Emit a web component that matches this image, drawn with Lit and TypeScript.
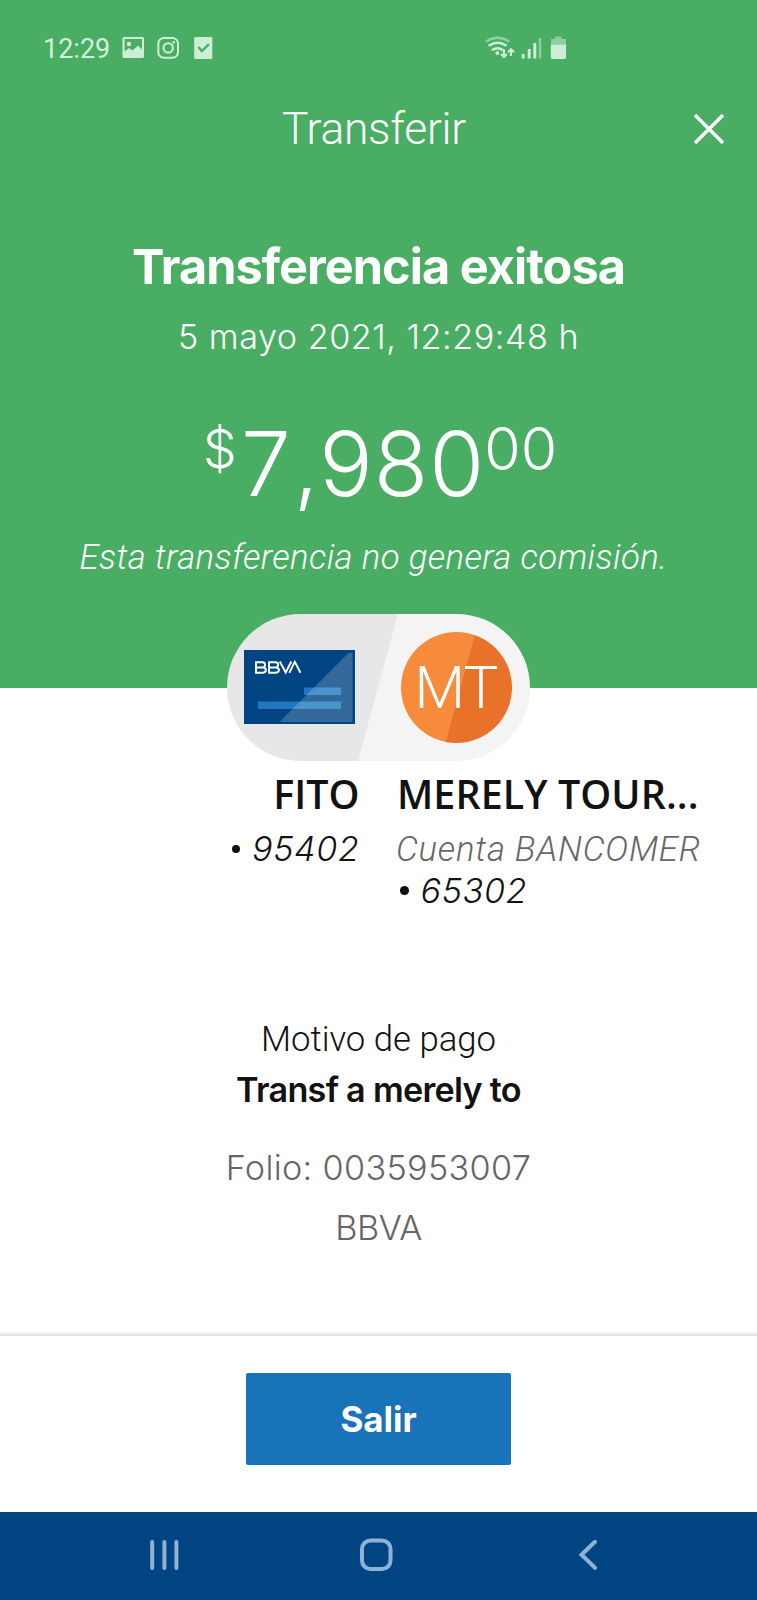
import { LitElement, html, css } from 'lit';
import { customElement } from 'lit/decorators.js';

@customElement('status-bar')
class StatusBar extends LitElement {
  static styles = css`
    :host { display: flex; height: 64px; padding: 33px 0 0 43px; box-sizing: border-box; color: #d5f0dc; }
    .time { font: 400 27px/32px Roboto, sans-serif; letter-spacing: 0; width: 79px; }
    svg { display: block; height: 32px; fill: none; stroke: none; }
    .right { margin-left: 271px; }
  `;
  render() {
    return html`
      <span class="time">12:29</span>
      <svg width="92" height="32" viewBox="122 33 92 32">
        <path fill="#cdeed6" fill-rule="evenodd" d="M124 37h18.500q1.500 0 1.500 1.500v18q0 1.500-1.500 1.500H124q-1.500 0-1.500-1.500v-18q0-1.500 1.500-1.500zM124.600 39v12.500l4.400-3.500 3.500 2.500 5.500-5 4 4V39z"/>
        <circle cx="129" cy="44" r="2.200" fill="#cdeed6"/>
        <rect x="158.300" y="38" width="19.700" height="19.700" rx="5.500" stroke="#cdeed6" stroke-width="2"/>
        <circle cx="168.200" cy="47.900" r="4.700" stroke="#cdeed6" stroke-width="2.100"/>
        <circle cx="173.800" cy="42.200" r="1.300" fill="#cdeed6"/>
        <path fill="#cdeed6" d="M195.500 37h15.500q1.300 0 1.300 1.300v19.400q0 1.300-1.300 1.300h-15.500q-1.300 0-1.300-1.300V38.300q0-1.300 1.300-1.300z"/>
        <path stroke="#49ae63" stroke-width="2.400" d="M198.300 47l3.600 4 7-6.800"/>
      </svg>
      <svg class="right" width="90" height="32" viewBox="485 33 90 32">
        <g stroke-width="2.500">
          <path stroke="#8fcea0" d="M485.800 41.700q12-7.800 23.600 0"/>
          <path stroke="#cdeed6" d="M488.700 45.800q9-6 17.800 0M492 50.200q5.500-4 11 0"/>
        </g>
        <circle cx="497.300" cy="53" r="1.900" fill="#cdeed6"/>
        <path stroke="#cdeed6" stroke-width="2.100" d="M504 49.500v7M501 54l3 3 3-3M511 56v-7M508 52.200l3-3 3 3"/>
        <path fill="#cdeed6" d="M521.700 54h3v4.500h-3zM527.700 49h3v9.500h-3zM533.300 43h3v15.500h-3z"/>
        <path fill="#8fcea0" d="M538.800 38h2.400v20.500h-2.400zM551 45v-6h4v-2.500h6.500V39h4.500v6z"/>
        <path fill="#cdeed6" d="M550.800 44.800h15.200v12.700q0 1.500-1.500 1.500h-12.200q-1.500 0-1.500-1.500z"/>
      </svg>
    `;
  }
}

@customElement('accounts-pill')
class AccountsPill extends LitElement {
  static styles = css`
    :host { display: flex; justify-content: space-between; align-items: center; width: 303px; height: 147px;
      padding: 0 18px; box-sizing: border-box; border-radius: 74px;
      background: linear-gradient(105.200deg, #e7e7e7 49.700%, #f4f4f4 50%); }
    svg { display: block; margin: -1px 0 0 -0.500px; }
    .avatar { width: 111px; height: 111px; border-radius: 50%; display: flex; align-items: center; justify-content: center;
      background: linear-gradient(105.200deg, #f68b3c 52.500%, #e9722b 53.200%);
      font: 300 58.300px/80px Roboto, sans-serif; letter-spacing: -0.600px; color: #fff; }
  `;
  render() {
    return html`
      <svg width="111" height="74" viewBox="0 0 111 74">
        <path fill="#004481" d="M0 0h111v74H0z"/>
        <path fill="#1f78be" d="M60 37.500h37v7.500H60zM14 51.500h83v7.500H14z"/>
        <path fill="#fff" fill-opacity=".2" d="M35.500 72L104.500 3h4v69z"/>
        <g fill="none" stroke="#fff" stroke-width="1.900">
          <path d="M12 12.300h6.200q3 0 3 2.500t-3 2.700H12zM12 17.500h6.700q3.200 0 3.200 2.600t-3.200 2.700H12zM25 12.300h6.200q3 0 3 2.500t-3 2.700H25zM25 17.500h6.700q3.200 0 3.200 2.600t-3.200 2.700H25z"/>
          <path d="M35.800 11.500l5.900 11 5.700-11M45.300 22.800l5.500-11 5.700 11"/>
        </g>
      </svg>
      <div class="avatar">MT</div>
    `;
  }
}

@customElement('app-root')
class AppRoot extends LitElement {
  static styles = css`
    :host { display: flex; flex-direction: column; width: 757px; height: 1600px; background: #fff; overflow: hidden;
      font-family: Roboto, sans-serif; font-weight: 300; color: #121212; white-space: nowrap; }
    .hero { height: 688px; background: #49ae63; color: #fff; display: flex; flex-direction: column; }
    .header { display: grid; grid-template-columns: 92px 1fr 101px; height: 60px; margin-top: 33px; align-items: center; }
    .header h1 { grid-column: 2; margin: 2px 0 -2px; text-align: center; font-weight: 300; font-size: 44.400px; line-height: 60px; letter-spacing: -0.270px; }
    .header svg { display: block; margin: 4px 0 0 38px; }
    h2 { margin: 80px 0 0; text-align: center; font: 700 48.600px/60px Inter, sans-serif; letter-spacing: -0.950px; }
    .date { margin-top: 16px; text-align: center; font-family: Inter, sans-serif; font-size: 34.200px; line-height: 48px; letter-spacing: 0.510px; }
    .amount { display: flex; justify-content: center; margin-top: 50px; height: 100px; padding-left: 3px; font-family: Inter, sans-serif; }
    .main { font-size: 89px; line-height: 100px; letter-spacing: 1px; margin-top: 2.500px; }
    .comma { margin: 0 0 0 2px; }
    .minor { font-size: 59px; line-height: 60px; margin-top: 8px; }
    .sign { margin-right: 4px; font-size: 54px; }
    .cents { letter-spacing: 0; margin-left: -1px; }
    .note { margin: 22px 10px 0 0; text-align: center; font-style: italic; font-size: 34.700px; line-height: 48px; letter-spacing: 0.390px; }
    .pill { display: flex; height: 147px; margin: -74px 0 0 226.500px; }
    .parties { display: grid; grid-template-columns: 359.500px 1fr; column-gap: 36.500px; margin-top: 8px; height: 246px; align-content: start; }
    .from { text-align: right; }
    .name { font: 600 39.400px/50px "Open Sans", sans-serif; margin-bottom: 10px; }
    .payee { padding-left: 1px; letter-spacing: 0.080px; }
    .acct { font-style: italic; font-size: 34.700px; line-height: 41.500px; height: 41.500px; }
    .num { font-family: Inter, sans-serif; font-size: 34.200px; letter-spacing: 0.630px; margin-top: -1px; }
    .bank { color: #666; letter-spacing: 0.770px; }
    .dot { display: inline-block; width: 8.500px; height: 8.500px; border-radius: 50%; background: #121212; margin: 0 12px 8px 4px; vertical-align: baseline; }
    .details { text-align: center; font-size: 34.700px; line-height: 48px; height: 321px; }
    .concept { margin-top: 3px; font: 600 34.200px/48px Inter, sans-serif; letter-spacing: -0.730px; }
    .folio { margin-top: 30px; font-family: Inter, sans-serif; font-size: 34.200px; color: #666; letter-spacing: 0.330px; }
    .issuer { margin-top: 12px; font-family: Inter, sans-serif; font-size: 34.200px; color: #666; letter-spacing: -0.390px; }
    .shade { height: 5px; margin-top: -5px; background: linear-gradient(#fff, #e2e2e2); }
    .footer { height: 176px; display: flex; justify-content: center; align-items: flex-start; padding-top: 37px; box-sizing: border-box; }
    button { width: 265px; height: 92px; border: 0; border-radius: 2px; padding: 0; background: #1973b8; color: #fff; font: 700 34.900px/48px Inter, sans-serif; }
    .nav { height: 88px; background: #004481; }
    .nav svg { display: block; }
  `;
  render() {
    return html`
      <div class="hero">
        <status-bar></status-bar>
        <div class="header">
          <h1>Transferir</h1>
          <svg width="30" height="30" viewBox="0 0 30 30"><path d="M1 1l28 28M29 1L1 29" stroke="#fff" stroke-width="3.400" fill="none"/></svg>
        </div>
        <h2>Transferencia exitosa</h2>
        <div class="date">5 mayo 2021, 12:29:48 h</div>
        <div class="amount"><span class="minor sign">$</span><span class="main">7<span class="comma">,</span>980</span><span class="minor cents">00</span></div>
        <div class="note">Esta transferencia no genera comisión.</div>
      </div>
      <div class="pill"><accounts-pill></accounts-pill></div>
      <div class="parties">
        <div class="from">
          <div class="name">FITO</div>
          <div class="acct num"><i class="dot"></i>95402</div>
        </div>
        <div>
          <div class="name payee">MERELY TOUR...</div>
          <div class="acct bank">Cuenta BANCOMER</div>
          <div class="acct num"><i class="dot"></i>65302</div>
        </div>
      </div>
      <div class="details">
        <div class="reason">Motivo de pago</div>
        <div class="concept">Transf a merely to</div>
        <div class="folio">Folio: 0035953007</div>
        <div class="issuer">BBVA</div>
      </div>
      <div class="shade"></div>
      <div class="footer"><button>Salir</button></div>
      <div class="nav">
        <svg width="757" height="88" viewBox="0 1512 757 88" fill="none" stroke="#8db2d6" stroke-linecap="round">
          <path stroke-width="4" d="M152.200 1542v26M164.400 1542v26M176.400 1542v26"/>
          <rect x="362" y="1540.500" width="28.500" height="28.500" rx="8.500" stroke-width="4"/>
          <path stroke-width="4" stroke-linejoin="miter" d="M595 1541.800L581.500 1554.800L595 1567.800"/>
        </svg>
      </div>
    `;
  }
}
